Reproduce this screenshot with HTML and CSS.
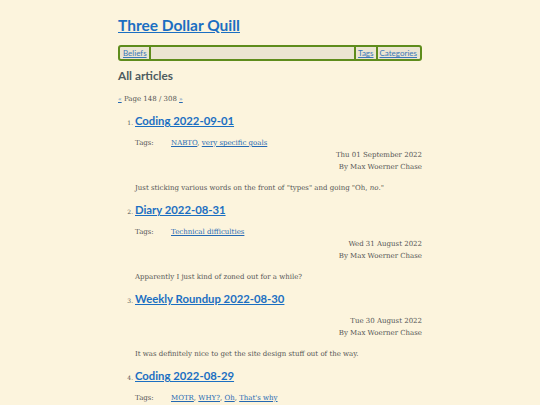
FILE: index.html
```html
<!DOCTYPE html>
<html>
<head>
<meta charset="utf-8">
<link rel="stylesheet" href="styles.css">
</head>
<body>
<div class="page">
  <h1 class="site-title"><a href="#">Three Dollar Quill</a></h1>
  <nav class="nav">
    <a class="nav-item nav-left" href="#">Beliefs</a>
    <span class="nav-spacer"></span>
    <a class="nav-item nav-right" href="#">Tags</a>
    <a class="nav-item nav-last" href="#">Categories</a>
  </nav>
  <h2 class="section-title">All articles</h2>
  <p class="pager"><a href="#">«</a> Page 148 / 308 <a href="#">»</a></p>
  <ol class="articles">
    <li class="article">
      <h3 class="article-title"><a href="#">Coding 2022-09-01</a></h3>
      <div class="meta">
        <div class="tags"><span class="tags-label">Tags:</span><span class="tags-list"><a href="#">NABTO</a>, <a href="#">very specific goals</a></span></div>
        <div class="byline">Thu 01 September 2022<br>By Max Woerner Chase</div>
      </div>
      <p class="summary">Just sticking various words on the front of "types" and going "Oh, <em>no</em>."</p>
    </li>
    <li class="article">
      <h3 class="article-title"><a href="#">Diary 2022-08-31</a></h3>
      <div class="meta">
        <div class="tags"><span class="tags-label">Tags:</span><span class="tags-list"><a href="#">Technical difficulties</a></span></div>
        <div class="byline">Wed 31 August 2022<br>By Max Woerner Chase</div>
      </div>
      <p class="summary">Apparently I just kind of zoned out for a while?</p>
    </li>
    <li class="article">
      <h3 class="article-title"><a href="#">Weekly Roundup 2022-08-30</a></h3>
      <div class="meta">
        <div class="byline">Tue 30 August 2022<br>By Max Woerner Chase</div>
      </div>
      <p class="summary">It was definitely nice to get the site design stuff out of the way.</p>
    </li>
    <li class="article">
      <h3 class="article-title"><a href="#">Coding 2022-08-29</a></h3>
      <div class="meta">
        <div class="tags"><span class="tags-label">Tags:</span><span class="tags-list"><a href="#">MOTR</a>, <a href="#">WHY?</a>, <a href="#">Oh</a>, <a href="#">That's why</a></span></div>
        <div class="byline">Mon 29 August 2022<br>By Max Woerner Chase</div>
      </div>
      <p class="summary">Still working on it.</p>
    </li>
  </ol>
</div>
</body>
</html>
```
FILE: styles.css
```css
html, body {
  margin: 0;
  padding: 0;
  background: #fcf4dd;
}
body {
  font-family: "DejaVu Serif", serif;
  font-size: 7px;
  line-height: 12px;
  color: #555555;
}
a {
  color: #2469b3;
}
.page {
  width: 304px;
  margin: 0 auto;
  padding-top: 15px;
}
.site-title {
  margin: 0;
  font-family: Lato, sans-serif;
  font-weight: 700;
  font-size: 15.5px;
  line-height: 20px;
}
.site-title a {
  color: #1b6fc2;
}
.nav {
  margin-top: 10px;
  display: flex;
  align-items: center;
  height: 12px;
  border: 2px solid #5e8c1c;
  border-radius: 3px;
  background: #ebe5d2;
  padding: 0 2px;
  font-family: Lato, sans-serif;
  font-size: 8px;
  line-height: 12px;
}
.nav-item {
  color: #3a78b8;
  padding: 0 1px;
}
.nav-left {
  border-right: 2px solid #5e8c1c;
  padding-right: 2px;
}
.nav-spacer {
  flex: 1;
}
.nav-right {
  border-left: 2px solid #5e8c1c;
  border-right: 2px solid #5e8c1c;
  padding: 0 2px;
}
.nav-last {
  padding-left: 2px;
}
.section-title {
  margin: 7px 0 0;
  font-family: Lato, sans-serif;
  font-weight: 700;
  font-size: 11.8px;
  line-height: 16px;
  color: #4d5b5f;
}
.pager {
  margin: 9px 0 0;
  font-size: 7px;
  line-height: 12px;
}
.pager a {
  font-size: 6px;
}
.articles {
  margin: 8px 0 0;
  padding-left: 17px;
}
.articles li::marker {
  font-size: 6px;
}
.article {
  margin-bottom: 8px;
}
.article-title {
  margin: 0;
  font-family: Lato, sans-serif;
  font-weight: 700;
  font-size: 11.3px;
  line-height: 16px;
}
.article-title a {
  color: #1b6fc2;
}
.meta {
  margin-top: 8px;
}
.tags {
  display: flex;
}
.tags-label {
  width: 36px;
}
.byline {
  text-align: right;
}
.summary {
  margin: 9px 0 0;
}
```
